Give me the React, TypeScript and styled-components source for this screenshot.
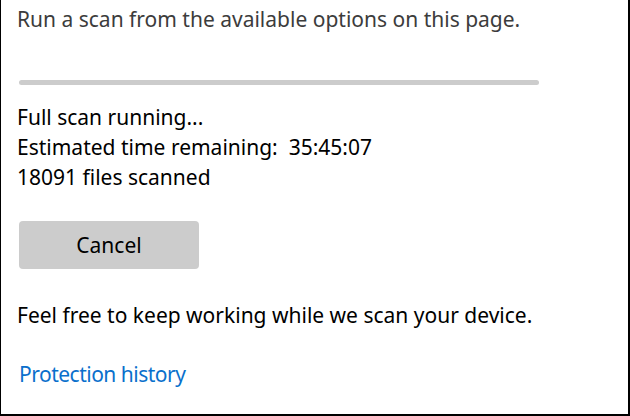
import React from "react";
import styled, { createGlobalStyle } from "styled-components";

const GlobalStyle = createGlobalStyle`
  html, body {
    margin: 0;
    padding: 0;
    background: #fff;
  }
  body {
    font-family: "Noto Sans", "Open Sans", sans-serif;
  }
`;

const Frame = styled.div`
  box-sizing: border-box;
  width: 630px;
  height: 416px;
  border-left: 1px solid #000;
  border-right: 2px solid #000;
  border-bottom: 2px solid #000;
  padding: 5px 0 0 16px;
  display: flex;
  flex-direction: column;
  align-items: flex-start;
  overflow: hidden;
`;

const Intro = styled.p`
  margin: 0;
  font-size: 21px;
  line-height: 28px;
  color: #3c3c3c;
`;

const Progress = styled.div`
  width: 520px;
  height: 5px;
  margin: 47px 0 0 2px;
  border-radius: 3px;
  background: #cccccc;
`;

const Status = styled.div`
  margin-top: 17px;
  display: flex;
  flex-direction: column;
`;

const Line = styled.span`
  font-size: 21px;
  line-height: 30px;
  color: #000;
`;

const CancelButton = styled.button`
  margin: 29px 0 0 2px;
  width: 180px;
  height: 48px;
  border: none;
  border-radius: 4px;
  background: #cccccc;
  font-family: inherit;
  font-size: 21px;
  color: #000;
  cursor: pointer;
`;

const Note = styled.p`
  margin: 31px 0 0;
  font-size: 21px;
  line-height: 30px;
  color: #000;
`;

const HistoryLink = styled.a`
  margin: 29px 0 0 2px;
  font-size: 21px;
  line-height: 30px;
  letter-spacing: -0.5px;
  color: #0a70cc;
  text-decoration: none;
  cursor: pointer;
`;

export default function App() {
  return (
    <>
      <GlobalStyle />
      <Frame>
        <Intro>Run a scan from the available options on this page.</Intro>
        <Progress />
        <Status>
          <Line>Full scan running...</Line>
          <Line>Estimated time remaining:&nbsp; 35:45:07</Line>
          <Line>18091 files scanned</Line>
        </Status>
        <CancelButton>Cancel</CancelButton>
        <Note>Feel free to keep working while we scan your device.</Note>
        <HistoryLink>Protection history</HistoryLink>
      </Frame>
    </>
  );
}
